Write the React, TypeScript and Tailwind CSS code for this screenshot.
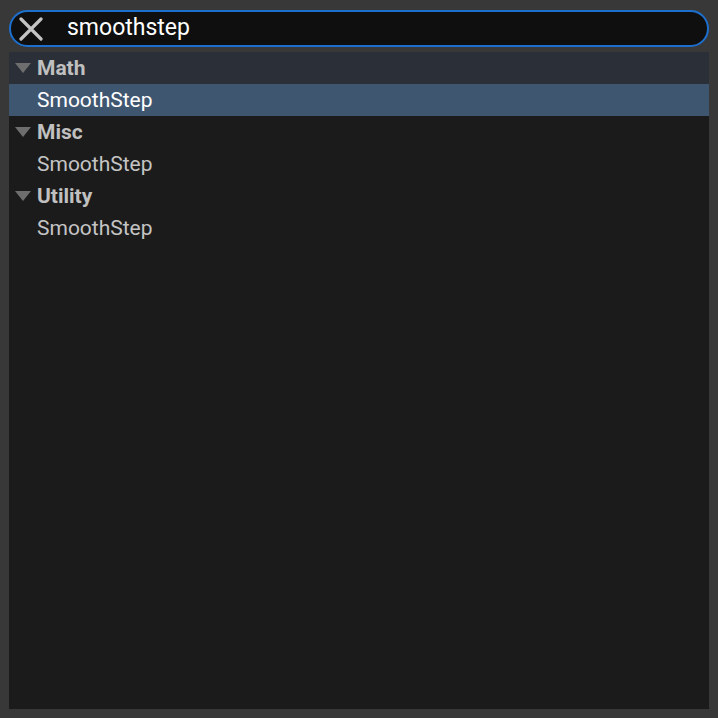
const groups = [
  { name: "Math", items: ["SmoothStep"] },
  { name: "Misc", items: ["SmoothStep"] },
  { name: "Utility", items: ["SmoothStep"] },
];

export default function App() {
  return (
    <div className="flex h-[718px] w-[718px] flex-col bg-[#383838] px-[9px] pt-[10px] pb-[9px] font-['Roboto',sans-serif]">
      <div className="flex h-[37px] items-center rounded-full border-2 border-[#1d6fce] bg-[#0f0f0f] pl-[8px]">
        <svg width="24" height="24" viewBox="0 0 24 24" className="shrink-0">
          <path d="M2 2 L22 22 M22 2 L2 22" stroke="#c4c4c4" strokeWidth="3.2" strokeLinecap="round" />
        </svg>
        <span className="mb-[3px] ml-[24px] text-[23px] leading-none text-white">smoothstep</span>
      </div>
      <div className="mt-[5px] flex-1 bg-[#1b1b1b]">
        {groups.map((group, gi) => (
          <div key={group.name}>
            <div className={`flex h-8 items-center ${gi === 0 ? "bg-[#2b3038]" : ""}`}>
              <svg width="18" height="12" viewBox="0 0 18 12" className="ml-[5px]">
                <path d="M1 1 L17 1 L9 11 Z" fill="#6e6e6e" />
              </svg>
              <span className="ml-[5px] pt-[2px] text-[21px] font-bold text-[#c0c0c0]">{group.name}</span>
            </div>
            {group.items.map((item) => (
              <div key={item} className={`flex h-8 items-center pl-[28px] ${gi === 0 ? "bg-[#3f5671] text-white" : "text-[#c4c4c4]"}`}>
                <span className="pt-[2px] text-[21px]">{item}</span>
              </div>
            ))}
          </div>
        ))}
      </div>
    </div>
  );
}
